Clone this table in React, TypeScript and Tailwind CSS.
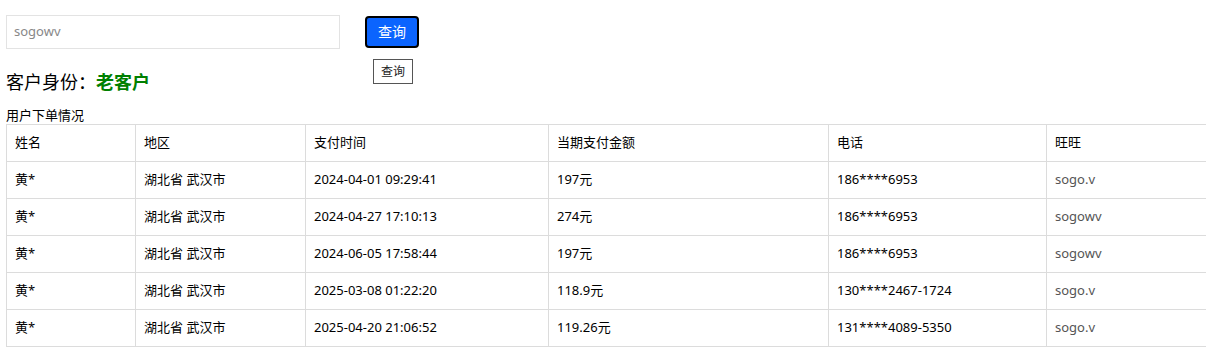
import React from "react";

const rows = [
  { name: "黄*", region: "湖北省 武汉市", time: "2024-04-01 09:29:41", amount: "197元", phone: "186****6953", ww: "sogo.v" },
  { name: "黄*", region: "湖北省 武汉市", time: "2024-04-27 17:10:13", amount: "274元", phone: "186****6953", ww: "sogowv" },
  { name: "黄*", region: "湖北省 武汉市", time: "2024-06-05 17:58:44", amount: "197元", phone: "186****6953", ww: "sogowv" },
  { name: "黄*", region: "湖北省 武汉市", time: "2025-03-08 01:22:20", amount: "118.9元", phone: "130****2467-1724", ww: "sogo.v" },
  { name: "黄*", region: "湖北省 武汉市", time: "2025-04-20 21:06:52", amount: "119.26元", phone: "131****4089-5350", ww: "sogo.v" },
];

const headers = ["姓名", "地区", "支付时间", "当期支付金额", "电话", "旺旺"];
const widths = [129, 170, 243, 280, 218, 200];

export default function App() {
  return (
    <div
      className="w-[1206px] h-[348px] overflow-hidden bg-white text-black"
      style={{ fontFamily: '"Noto Sans", "Noto Sans CJK SC", sans-serif' }}
    >
      <div className="pl-[6px] pt-[15px]">
        <div className="flex items-center h-[34px]">
          <div className="w-[334px] h-[34px] border border-[#e3e3e3] flex items-center pl-[7px] text-[13px] text-[#888]">
            sogowv
          </div>
          <div className="relative ml-[25px]">
            <button className="w-[54px] h-[32px] rounded-[4px] border-2 border-black bg-[#0b64fe] text-white text-[14px] leading-none flex items-center justify-center">
              查询
            </button>
            <div className="absolute left-[8px] top-[43px] w-[40px] h-[25px] border border-[#555] bg-white text-[12px] text-[#222] flex items-center justify-center">
              查询
            </div>
          </div>
        </div>
        <div className="mt-[21px] h-[24px] flex items-center text-[18px] leading-[24px]">
          <span>客户身份：</span>
          <span className="font-bold text-[#008000]">老客户</span>
        </div>
        <div className="mt-[12px] h-[18px] text-[13px] leading-[18px]">用户下单情况</div>
        <table className="border-collapse table-fixed text-[13px]" style={{ width: 1240 }}>
          <colgroup>
            {widths.map((w, i) => (
              <col key={i} style={{ width: w }} />
            ))}
          </colgroup>
          <thead>
            <tr>
              {headers.map((h) => (
                <th key={h} className="h-[37px] border border-[#dcdcdc] px-[8px] text-left font-normal">
                  {h}
                </th>
              ))}
            </tr>
          </thead>
          <tbody>
            {rows.map((r, i) => (
              <tr key={i}>
                <td className="h-[37px] border border-[#dcdcdc] px-[8px]">{r.name}</td>
                <td className="h-[37px] border border-[#dcdcdc] px-[8px]">{r.region}</td>
                <td className="h-[37px] border border-[#dcdcdc] px-[8px]">{r.time}</td>
                <td className="h-[37px] border border-[#dcdcdc] px-[8px]">{r.amount}</td>
                <td className="h-[37px] border border-[#dcdcdc] px-[8px]">{r.phone}</td>
                <td className="h-[37px] border border-[#dcdcdc] px-[8px] text-[#555]">{r.ww}</td>
              </tr>
            ))}
          </tbody>
        </table>
      </div>
    </div>
  );
}
